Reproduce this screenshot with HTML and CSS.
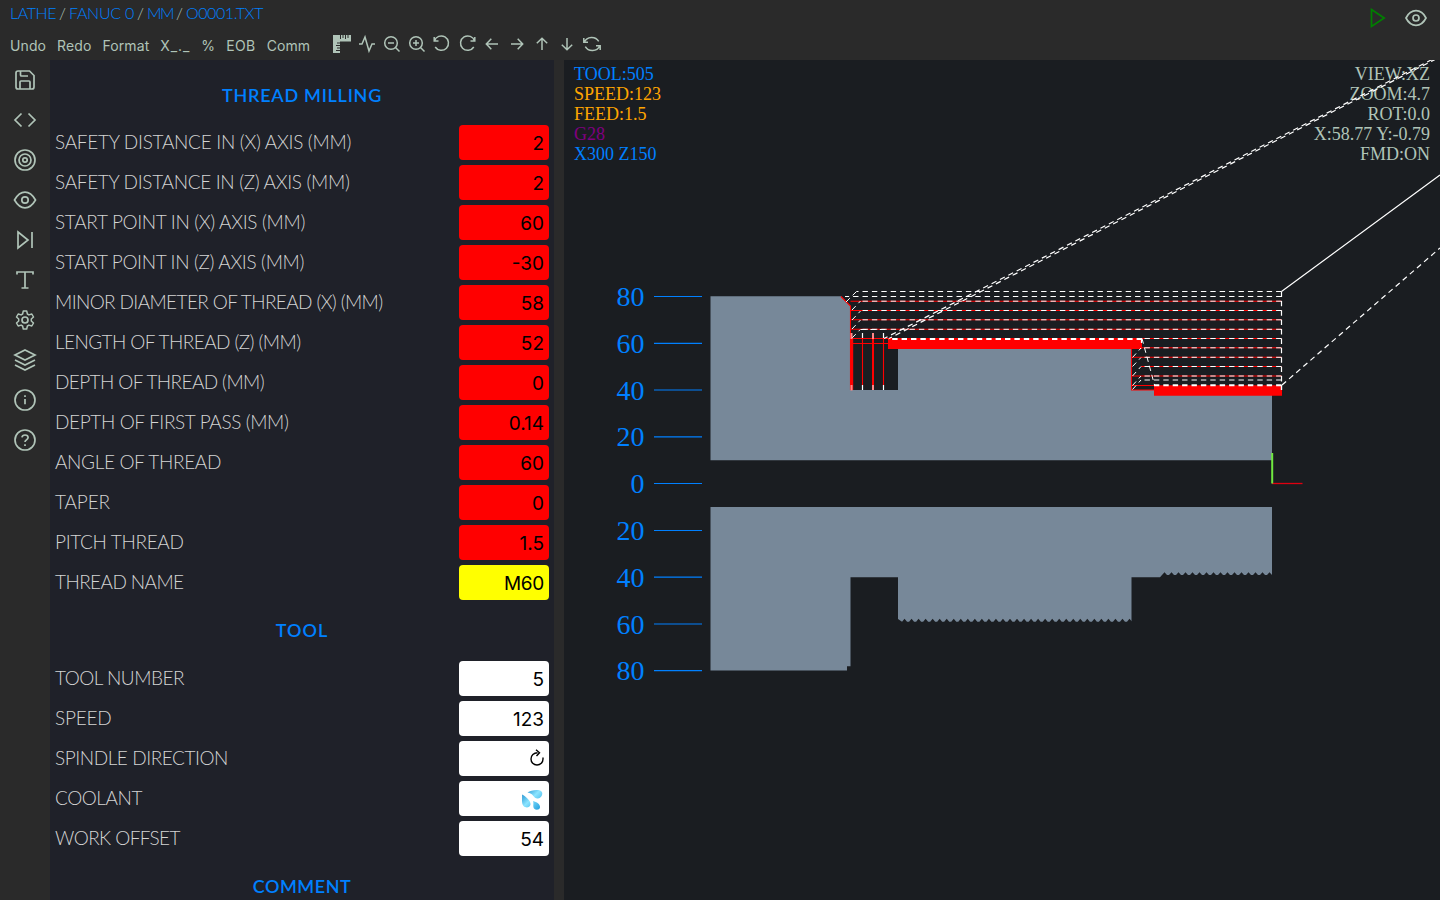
FILE: index.html
```html
<!DOCTYPE html>
<html lang="en">
<head>
<meta charset="utf-8">
<title>O0001.TXT</title>
<link rel="stylesheet" href="styles.css">
</head>
<body>
<header class="top">
  <div class="top-left">
    <nav class="crumbs"><a data-w="46">LATHE</a><i>/</i><a data-w="65">FANUC 0</a><i>/</i><a data-w="26">MM</a><i>/</i><a data-w="77">O0001.TXT</a></nav>
    <div class="tools">
      <div class="menu"><span>Undo</span><span>Redo</span><span>Format</span><span data-w="30">X_._</span><span>%</span><span data-w="29.500">EOB</span><span data-w="43.500">Comm</span></div>
      <div class="toolicons">
        <svg class="ti" viewBox="0 0 20 20"><path class="solid" d="M1 1H19V7.500H8V19H1Z"/><path class="cut" d="M8.500 1V5M11 1V4M13.500 1V5M16 1V4M5 9H8M4 11.500H8M5 14H8M4 16.500H8"/></svg>
        <svg class="ti" viewBox="0 0 20 20"><path d="M2 10H5L8 3L12 17L15 10H18"/></svg>
        <svg class="ti" viewBox="0 0 20 20"><circle cx="9" cy="9" r="6.300"/><path d="M13.500 13.500L17.500 17.500M6 9H12"/></svg>
        <svg class="ti" viewBox="0 0 20 20"><circle cx="9" cy="9" r="6.300"/><path d="M13.500 13.500L17.500 17.500M6 9H12M9 6V12"/></svg>
        <svg class="ti" viewBox="0 0 20 20"><path d="M2.200 3V7H6.500M2.400 7A7.200 7.200 0 1 1 3.200 13"/></svg>
        <svg class="ti" viewBox="0 0 20 20"><path d="M17.800 3V7H13.500M17.600 7A7.200 7.200 0 1 0 16.800 13"/></svg>
        <svg class="ti" viewBox="0 0 20 20"><path d="M16 10H4.500M9.300 4.800L4.300 10L9.300 15.200"/></svg>
        <svg class="ti" viewBox="0 0 20 20"><path d="M4 10H15.500M10.700 4.800L15.700 10L10.700 15.200"/></svg>
        <svg class="ti" viewBox="0 0 20 20"><path d="M10 16V4.500M4.800 9.300L10 4.300L15.200 9.300"/></svg>
        <svg class="ti" viewBox="0 0 20 20"><path d="M10 4V15.500M4.800 10.700L10 15.700L15.200 10.700"/></svg>
        <svg class="ti" viewBox="0 0 20 20"><path d="M1.800 4V8.200H6M2.300 8A8 7.500 0 0 1 16.700 7.300M18.200 16V11.800H14M17.700 12A8 7.500 0 0 1 3.300 12.700"/></svg>
      </div>
    </div>
  </div>
  <div class="top-right">
    <svg class="ico run" viewBox="0 0 24 24"><path d="M6.500 3.500L19.200 12L6.500 20.500Z"/></svg>
    <svg class="ico" viewBox="0 0 24 24"><path d="M2 12C4.500 7 8 4.700 12 4.700S19.500 7 22 12C19.500 17 16 19.300 12 19.300S4.500 17 2 12Z"/><circle cx="12" cy="12" r="3"/></svg>
  </div>
</header>
<main class="work">
  <aside class="side">
    <svg class="ico" viewBox="0 0 24 24"><path d="M3 5Q3 3 5 3H16.500L21 7.500V19Q21 21 19 21H5Q3 21 3 19ZM7 21V14Q7 13 8 13H16Q17 13 17 14V21M7.500 3V7Q7.500 8 8.500 8H15"/></svg>
    <svg class="ico" viewBox="0 0 24 24"><path d="M8.500 5.500L2 12L8.500 18.500M15.500 5.500L22 12L15.500 18.500"/></svg>
    <svg class="ico" viewBox="0 0 24 24"><circle cx="12" cy="12" r="10"/><circle cx="12" cy="12" r="6"/><circle cx="12" cy="12" r="2.200"/></svg>
    <svg class="ico" viewBox="0 0 24 24"><path d="M1.500 12C4.500 6.800 8 4.200 12 4.200S19.500 6.800 22.500 12C19.500 17.200 16 19.800 12 19.800S4.500 17.200 1.500 12Z"/><circle cx="12" cy="12" r="3.200"/></svg>
    <svg class="ico" viewBox="0 0 24 24"><path d="M5 4L15 12L5 20ZM19 4V20"/></svg>
    <svg class="ico" viewBox="0 0 24 24"><path d="M4 6.500V4H20V6.500M12 4V20M8.500 20H15.500"/></svg>
    <svg class="ico" viewBox="0 0 24 24"><path class="gear" d="M10.300 3h3.400l.7 3 1.500.9 2.900-.9 1.700 3-2.200 2v2l2.200 2-1.700 3-2.900-.9-1.500.9-.7 3h-3.400l-.7-3-1.500-.9-2.900.9-1.700-3 2.200-2v-2l-2.200-2 1.700-3 2.900.9 1.500-.9Z"/><circle cx="12" cy="12" r="3"/></svg>
    <svg class="ico" viewBox="0 0 24 24"><path d="M12 2L22 7L12 12L2 7ZM2 12L12 17L22 12M2 17L12 22L22 17"/></svg>
    <svg class="ico" viewBox="0 0 24 24"><circle cx="12" cy="12" r="10"/><path d="M12 11V16.300M12 7.200V9"/></svg>
    <svg class="ico" viewBox="0 0 24 24"><circle cx="12" cy="12" r="10"/><path d="M8.900 9.300C9.200 7.700 10.500 7 12 7C13.800 7 15.100 8 15.100 9.600C15.100 11.800 12 12 12 14M12 16.200V18"/></svg>
  </aside>
  <section class="form">
    <h2 class="first"><span data-w="160">THREAD MILLING</span></h2>
    <div class="rows">
      <div class="row"><label data-w="296">SAFETY DISTANCE IN (X) AXIS (MM)</label><output class="red">2</output></div>
      <div class="row"><label data-w="294.500">SAFETY DISTANCE IN (Z) AXIS (MM)</label><output class="red">2</output></div>
      <div class="row"><label data-w="250">START POINT IN (X) AXIS (MM)</label><output class="red">60</output></div>
      <div class="row"><label data-w="249">START POINT IN (Z) AXIS (MM)</label><output class="red">-30</output></div>
      <div class="row"><label data-w="327.500">MINOR DIAMETER OF THREAD (X) (MM)</label><output class="red">58</output></div>
      <div class="row"><label data-w="245.500">LENGTH OF THREAD (Z) (MM)</label><output class="red">52</output></div>
      <div class="row"><label data-w="209">DEPTH OF THREAD (MM)</label><output class="red">0</output></div>
      <div class="row"><label data-w="233.500">DEPTH OF FIRST PASS (MM)</label><output class="red">0.14</output></div>
      <div class="row"><label data-w="166">ANGLE OF THREAD</label><output class="red">60</output></div>
      <div class="row"><label data-w="55">TAPER</label><output class="red">0</output></div>
      <div class="row"><label data-w="128.500">PITCH THREAD</label><output class="red">1.5</output></div>
      <div class="row"><label data-w="128.500">THREAD NAME</label><output class="yellow">M60</output></div>
    </div>
    <h2><span data-w="52.500">TOOL</span></h2>
    <div class="rows">
      <div class="row"><label data-w="129">TOOL NUMBER</label><output>5</output></div>
      <div class="row"><label data-w="56.500">SPEED</label><output>123</output></div>
      <div class="row"><label data-w="173">SPINDLE DIRECTION</label><output><svg class="spin" viewBox="0 0 14 18"><path d="M7.500 3.800C3.800 3.800 1 6.500 1 10S3.600 16 7 16S13 13.500 13 10V8.500M6 .8L9.500 3.800L6.500 7"/></svg></output></div>
      <div class="row"><label data-w="87">COOLANT</label><output><svg class="drops" viewBox="0 0 22 22"><defs><linearGradient id="w" x1="0" y1="0" x2="1" y2="1"><stop offset="0" stop-color="#087dc5"/><stop offset=".45" stop-color="#8be4ff"/><stop offset="1" stop-color="#1597da"/></linearGradient></defs><path fill="url(#w)" d="M6.500 3.500C10 1 18 0 20.500 2.500C22.500 5 20.500 9 17 9.500C12.500 10 12.500 4 6.500 3.500ZM1 5.500C5 7.500 10 12 9.500 15.500C9 18.500 5 19.500 2.500 17C0 14 1.500 9 1 5.500ZM12 12C16 13 19.500 15.500 19 18.500C18.500 21 15 21.500 13 19.500C11.500 17.500 13 15 12 12Z"/></svg></output></div>
      <div class="row"><label data-w="125">WORK OFFSET</label><output>54</output></div>
    </div>
    <h2><span data-w="98.500">COMMENT</span></h2>
  </section>
  <svg class="plot" viewBox="564 60 876 840">
    <g class="hud">
      <text class="blue" x="574" y="80">TOOL:505</text><text class="orange" x="574" y="100">SPEED:123</text><text class="orange" x="574" y="120">FEED:1.5</text><text class="purple" x="574" y="140">G28</text><text class="blue" x="574" y="160">X300 Z150</text>
      <g class="right"><text x="1430" y="80">VIEW:XZ</text><text x="1430" y="100">ZOOM:4.7</text><text x="1430" y="120">ROT:0.0</text><text x="1430" y="140">X:58.77 Y:-0.79</text><text x="1430" y="160">FMD:ON</text></g>
    </g>
    <g class="scale">
      <text x="644.500" y="306">80</text><text x="644.500" y="353">60</text><text x="644.500" y="399.500">40</text><text x="644.500" y="446">20</text><text x="644.500" y="493">0</text><text x="644.500" y="540">20</text><text x="644.500" y="586.500">40</text><text x="644.500" y="633.500">60</text><text x="644.500" y="680">80</text>
      <path d="M654 296.500H702M654 343.400H702M654 390H702M654 436.800H702M654 483.500H702M654 530.500H702M654 577.200H702M654 624H702M654 670.700H702"/>
    </g>
    <path class="part" d="M710.500 296.300H841L850.500 306V390H898V349H1131.500V390H1154V395H1272V460.300H710.500Z"/>
    <path id="lower" class="part"/>
    <path class="r1" d="M841 296.500L850.500 306V390M850.500 310.500H1281.500M850.500 338.500H1281.500M850.500 343.500H888M862.500 338V386M883.500 338V386M1131.500 349V390H1154M1131.500 385.500H1154M1141 366.500H1281.500"/>
    <path class="r2" d="M850.500 301.200H1281.500M850.500 319.800H1281.500M850.500 329.300H1281.500M1132 347.800H1281.500M1132 357.300H1281.500M1132 376H1281.500"/>
    <path class="r3" d="M851.700 338V390"/><path class="r4" d="M873 338V390"/>
    <path class="redfill" d="M888 338.500H1142V349H888ZM1154 385.300H1282V395.800H1154Z"/>
    <path class="dash" id="passes"/>
    <path class="dash" d="M846 302L856.500 291.500M852 310L860.500 301M852 320L860.500 311M852 329L860.500 320M852 338L860.500 329.300M1132.500 357.500L1141 348M1132.500 366.500L1141 357.500M1132.500 376L1141 366.500M1132.500 385.500L1141 376M1132.500 389.500L1141 380M1142 338.500L1154.500 385"/>
    <path class="dash rapid" d="M1281.500 291.500V390M1282 385L1440 248M1432 59.500L884 338.500M1436 59L889 338.500M861 329.500H888"/>
    <path class="dash thick" d="M1281.500 385.300H1154M1142 339H888"/>
    <path class="solidline" d="M1281.500 291.500L1440 175M862.500 333V338M883.500 333V338M862.500 385V390M883.500 385V390M1141.500 338V343M1281.500 385V390"/>
    <path class="pink" d="M851.500 333V339M851.500 385V390.500M873 333V339M873 385V390"/>
    <path class="zred" d="M1272 483.500H1302.500"/><path class="zgreen" d="M1272.200 453V483.500"/>
  </svg>
</main>
<script src="plot.js"></script>
</body>
</html>
```
FILE: styles.css
```css
* { box-sizing: border-box; }
body { margin: 0; width: 1440px; height: 900px; overflow: hidden; background: #2a2a2a; display: flex; flex-direction: column; color: #b0c4b8; font-family: Inter, "Liberation Sans", sans-serif; }
svg { display: block; flex: none; }
.top { height: 60px; display: flex; justify-content: space-between; }
.crumbs { font: 300 16px/20px Lato, sans-serif; padding: 3px 0 0 10px; height: 31px; display: flex; }
.crumbs a { color: #0080ff; white-space: nowrap; }
.crumbs i { width: 13px; text-align: center; font-style: normal; }
.tools { display: flex; height: 29px; }
.menu { display: flex; gap: 11px; padding-left: 10px; width: 330px; font-size: 14px; line-height: 30px; letter-spacing: .1px; }
.toolicons { display: flex; gap: 5px; padding-top: 3px; margin-left: 2px; }
.ti { width: 20px; height: 20px; fill: none; stroke: #b0c4b8; stroke-width: 1.5; }
.ti .solid { fill: #b0c4b8; stroke: none; }
.ti .cut { stroke: #2a2a2a; stroke-width: 1; }
.top-right { display: flex; gap: 15px; padding: 6px 12px 0 0; }
.ico { width: 24px; height: 24px; fill: none; stroke: #b0c4b8; stroke-width: 1.7; }
.run { stroke: #008000; }
.gear { stroke-width: 1.5; stroke-linejoin: round; }
.work { display: flex; height: 840px; }
.side { width: 50px; padding-top: 8px; display: flex; flex-direction: column; align-items: center; gap: 16px; }
.form { width: 504px; margin-right: 10px; background: #1f2129; overflow: hidden; padding: 0 5px; }
.form h2 { margin: 0; height: 61px; font: 600 18px/60px Lato, sans-serif; text-align: center; color: #0080ff; }
.form .first { height: 65px; padding-top: 5px; }
.rows { display: flex; flex-direction: column; gap: 5px; }
.row { display: flex; justify-content: space-between; height: 35px; }
.row label { font: 300 19px/34px Lato, sans-serif; color: #d4d4d4; white-space: nowrap; }
.row output { width: 90px; height: 35px; border-radius: 4px; background: #fff; color: #000; font-size: 19px; padding: 2px 5px 0 0; display: flex; justify-content: flex-end; align-items: center; }
.row .red { background: #f00; }
.row .yellow { background: #ff0; letter-spacing: -.3px; }
.spin { width: 14px; height: 18px; fill: none; stroke: #000; stroke-width: 1.4; margin-top: -3px; }
.drops { width: 22px; height: 22px; margin-right: 1px; }
.plot { width: 876px; height: 840px; background: #1a1d21; font-family: "Liberation Serif", serif; }
.hud { font-size: 18px; fill: #b0c4b8; }
.right { text-anchor: end; }
.hud .blue { fill: #0080ff; }
.hud .orange { fill: #ffa500; }
.hud .purple { fill: #800080; }
.scale { font-size: 28px; fill: #0080ff; text-anchor: end; }
.scale path { stroke: #0080ff; stroke-width: 1.2; }
.part { fill: #778899; }
.r1, .r2, .r3, .r4, .dash, .solidline, .pink, .zred, .zgreen { fill: none; stroke: #f00; stroke-width: 1.1; }
.r3 { stroke-width: 3; }
.r4 { stroke-width: 2; }
.redfill { fill: #f00; }
.dash { stroke: #fff; stroke-width: 1; stroke-dasharray: 5.400 4; }
.rapid { stroke-width: 1.2; }
.thick { stroke-width: 2; }
.solidline { stroke: #fff; stroke-width: 1.2; }
.pink { stroke: #ff8888; stroke-width: 2; }
.zred { stroke: #e00010; stroke-width: 1.3; }
.zgreen { stroke: #70e840; stroke-width: 2; }
```
FILE: plot.js
```js
// Track each caption so that it fills its nominal width.
document.querySelectorAll("[data-w]").forEach((el) => {
  const range = document.createRange();
  range.selectNodeContents(el);
  el.style.letterSpacing = "0px";
  const gap = +el.dataset.w - range.getBoundingClientRect().width;
  el.style.letterSpacing = gap / el.textContent.length + "px";
});

// Threaded profile of the lower half section.
let d = "M710.5 507H1272V575";
for (let x = 1269.5; x > 1163; x -= 7) d += `L${x + 2.5} 575L${x} 572.3L${x - 2.5} 575`;
d += "L1160 577.2H1131.5V621";
for (let x = 1129.5; x > 903; x -= 7.03) d += `L${x + 2.5} 621.8L${x} 618.8L${x - 2.5} 621.8`;
d += "L898 619V577.2H850.5V666.3H847V670.6H710.5Z";
document.getElementById("lower").setAttribute("d", d);

// Roughing passes, drawn from the retract plane towards the chuck.
const passes = [[291.5, 856.5], [296.5, 845], [301.2, 860], [310.5, 860], [319.8, 860], [329.3, 860], [338.5, 1142], [347.8, 1141], [357.3, 1141], [366.5, 1141], [376, 1141], [380, 1141]];
document.getElementById("passes").setAttribute("d", passes.map(([y, x]) => `M1281.5 ${y}H${x}`).join(""));
```
